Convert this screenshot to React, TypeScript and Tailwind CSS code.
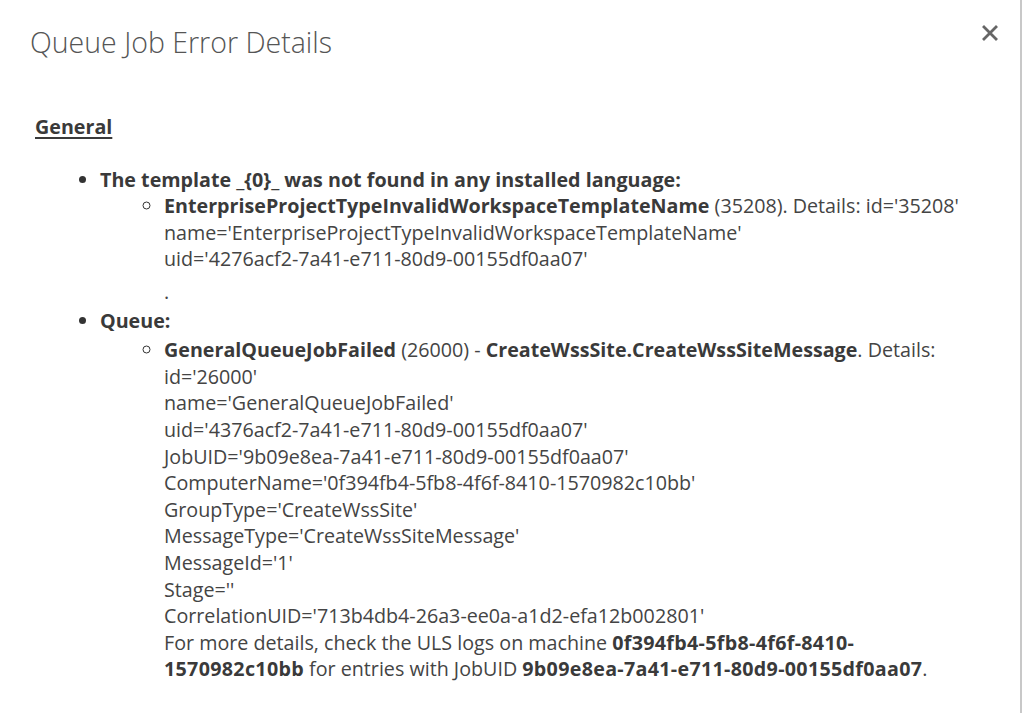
const font = { fontFamily: '"Open Sans", "Noto Sans", sans-serif' };

function Line({ children }: { children: React.ReactNode }) {
  return <div>{children}</div>;
}

export default function App() {
  return (
    <div
      className="flex h-[713px] w-full overflow-hidden bg-white text-[#444]"
      style={font}
    >
      <div className="flex-1 min-w-0">
        <div className="flex items-start justify-between pl-[30px] pr-[22px] pt-[23px]">
          <h1 className="text-[28.5px] font-light leading-[38px] text-[#555]">
            Queue Job Error Details
          </h1>
          <button className="mt-[2px] text-[#666]">
            <svg width="16" height="16" viewBox="0 0 16 16" fill="none">
              <path
                d="M2 2L14 14M14 2L2 14"
                stroke="currentColor"
                strokeWidth="2.8"
                strokeLinecap="square"
              />
            </svg>
          </button>
        </div>

        <div className="pl-[35px] pr-[20px] pt-[53px] text-[19.7px] leading-[26.6px]">
          <div className="font-bold text-[#3a3a3a] underline decoration-[1.5px] underline-offset-[3px]">
            General
          </div>

          <ul className="mt-[26px] list-disc pl-[65px] marker:text-[#333]">
            <li>
              <span className="font-bold text-[#3a3a3a]">
                The template _{"{0}"}_ was not found in any installed language:
              </span>
              <ul className="list-[circle] pl-[64px]">
                <li>
                  <span className="font-bold text-[#3a3a3a]">
                    EnterpriseProjectTypeInvalidWorkspaceTemplateName
                  </span>{" "}
                  (35208). Details: id='35208'
                  <Line>name='EnterpriseProjectTypeInvalidWorkspaceTemplateName'</Line>
                  <Line>uid='4276acf2-7a41-e711-80d9-00155df0aa07'</Line>
                  <div className="mt-[6px]">.</div>
                </li>
              </ul>
            </li>
            <li className="mt-[2px]">
              <span className="font-bold text-[#3a3a3a]">Queue:</span>
              <ul className="mt-[3px] list-[circle] pl-[64px]">
                <li>
                  <span className="font-bold text-[#3a3a3a]">GeneralQueueJobFailed</span>{" "}
                  (26000) -{" "}
                  <span className="font-bold text-[#3a3a3a]">
                    CreateWssSite.CreateWssSiteMessage
                  </span>
                  . Details:
                  <Line>id='26000'</Line>
                  <Line>name='GeneralQueueJobFailed'</Line>
                  <Line>uid='4376acf2-7a41-e711-80d9-00155df0aa07'</Line>
                  <Line>JobUID='9b09e8ea-7a41-e711-80d9-00155df0aa07'</Line>
                  <Line>ComputerName='0f394fb4-5fb8-4f6f-8410-1570982c10bb'</Line>
                  <Line>GroupType='CreateWssSite'</Line>
                  <Line>MessageType='CreateWssSiteMessage'</Line>
                  <Line>MessageId='1'</Line>
                  <Line>Stage=''</Line>
                  <Line>CorrelationUID='713b4db4-26a3-ee0a-a1d2-efa12b002801'</Line>
                  <Line>
                    For more details, check the ULS logs on machine{" "}
                    <span className="font-bold tracking-[0.3px] text-[#3a3a3a]">
                      0f394fb4-5fb8-4f6f-8410-
                    </span>
                    <br />
                    <span className="font-bold tracking-[0.3px] text-[#3a3a3a]">1570982c10bb</span>{" "}
                    for entries with JobUID{" "}
                    <span className="font-bold tracking-[0.3px] text-[#3a3a3a]">
                      9b09e8ea-7a41-e711-80d9-00155df0aa07
                    </span>
                    .
                  </Line>
                </li>
              </ul>
            </li>
          </ul>
        </div>
      </div>
      <div className="w-[2px] shrink-0 bg-[#c8c8c8]" />
      <div className="w-[2px] shrink-0" />
    </div>
  );
}
